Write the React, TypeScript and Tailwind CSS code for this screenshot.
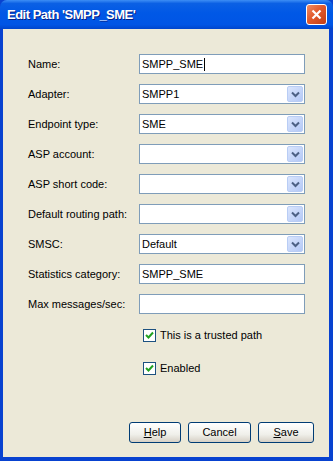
import * as React from 'react';

const FONT = "font-['Tahoma','Liberation_Sans',sans-serif]";

function Chevron() {
  return (
    <svg width="9" height="7" viewBox="0 0 9 7">
      <path d="M1 1.5 L4.5 5 L8 1.5" fill="none" stroke="#4d6185" strokeWidth="2" />
    </svg>
  );
}

function TextField({ value, cursor }: { value?: string; cursor?: boolean }) {
  return (
    <div className="h-[20px] w-[166px] border border-[#7f9db9] bg-white flex items-center pl-[2px] text-[11px] text-black">
      <span>{value}</span>
      {cursor && <span className="ml-[1px] inline-block h-[13px] w-px bg-black" />}
    </div>
  );
}

function SelectField({ value }: { value?: string }) {
  return (
    <div className="h-[20px] w-[166px] border border-[#7f9db9] bg-white flex items-center justify-between pl-[2px] pr-px text-[11px] text-black">
      <span>{value}</span>
      <div className="h-[16px] w-[16px] rounded-[2px] border border-[#b9cdf5] bg-[linear-gradient(135deg,#dbe6fd,#b4c8f6)] flex items-center justify-center">
        <Chevron />
      </div>
    </div>
  );
}

function Checkbox({ label }: { label: string }) {
  return (
    <div className="h-[13px] flex items-center gap-[4px] text-[11px] leading-[13px] text-black">
      <div className="h-[13px] w-[13px] border border-[#1c5180] bg-white flex items-center justify-center">
        <svg width="9" height="9" viewBox="0 0 9 9">
          <path d="M1 4 L3.5 6.5 L8 1.5" fill="none" stroke="#21a121" strokeWidth="2" />
        </svg>
      </div>
      <span>{label}</span>
    </div>
  );
}

function Button({ children, width }: { children: React.ReactNode; width: string }) {
  return (
    <div
      className={`h-[21px] ${width} rounded-[3px] border border-[#003c74] bg-[linear-gradient(#ffffff,#f0f0ea_60%,#d6d0c5)] flex items-center justify-center text-[11px] text-black`}
    >
      {children}
    </div>
  );
}

const rows: { label: string; kind: 'text' | 'select'; value?: string; cursor?: boolean }[] = [
  { label: 'Name:', kind: 'text', value: 'SMPP_SME', cursor: true },
  { label: 'Adapter:', kind: 'select', value: 'SMPP1' },
  { label: 'Endpoint type:', kind: 'select', value: 'SME' },
  { label: 'ASP account:', kind: 'select' },
  { label: 'ASP short code:', kind: 'select' },
  { label: 'Default routing path:', kind: 'select' },
  { label: 'SMSC:', kind: 'select', value: 'Default' },
  { label: 'Statistics category:', kind: 'text', value: 'SMPP_SME' },
  { label: 'Max messages/sec:', kind: 'text' },
];

export default function App() {
  return (
    <div className={`${FONT} w-[333px] h-[461px] flex flex-col bg-[#0842d0] overflow-hidden`}>
      {/* Title bar */}
      <div className="h-[29px] shrink-0 flex items-center justify-between pl-[7px] pr-[6px] rounded-t-[7px] bg-[linear-gradient(#3d8ef5,#0b60e4_12%,#0058e6_45%,#0055e5_85%,#0045cc)]">
        <span className="text-white font-bold text-[13px] tracking-[-0.5px] font-['Trebuchet_MS','Liberation_Sans',sans-serif] [text-shadow:1px_1px_0_#0a1e80]">
          Edit Path 'SMPP_SME'
        </span>
        <div className="h-[21px] w-[21px] rounded-[3px] border border-white bg-[linear-gradient(135deg,#ee8d66,#e25a2c_45%,#c23d15)] flex items-center justify-center">
          <svg width="11" height="11" viewBox="0 0 11 11">
            <path d="M1.5 1.5 L9.5 9.5 M9.5 1.5 L1.5 9.5" stroke="white" strokeWidth="2.2" />
          </svg>
        </div>
      </div>

      {/* Body */}
      <div className="flex-1 ml-[3px] mr-[4px] mb-[4px] bg-[#ece9d8] flex flex-col pt-[25px] pr-[15px] pb-[14px]">
        <div className="flex flex-col gap-[10px]">
          {rows.map((r) => (
            <div key={r.label} className="flex items-center">
              <div className="w-[136px] pl-[25px] text-[11px] text-black">{r.label}</div>
              {r.kind === 'text' ? <TextField value={r.value} cursor={r.cursor} /> : <SelectField value={r.value} />}
            </div>
          ))}
        </div>

        <div className="flex flex-col gap-[20px] mt-[15px] pl-[140px]">
          <Checkbox label="This is a trusted path" />
          <Checkbox label="Enabled" />
        </div>

        <div className="mt-auto flex justify-end gap-[7px]">
          <Button width="w-[52px]">
            <span><span className="underline">H</span>elp</span>
          </Button>
          <Button width="w-[63px]">Cancel</Button>
          <Button width="w-[56px]">
            <span><span className="underline">S</span>ave</span>
          </Button>
        </div>
      </div>
    </div>
  );
}
